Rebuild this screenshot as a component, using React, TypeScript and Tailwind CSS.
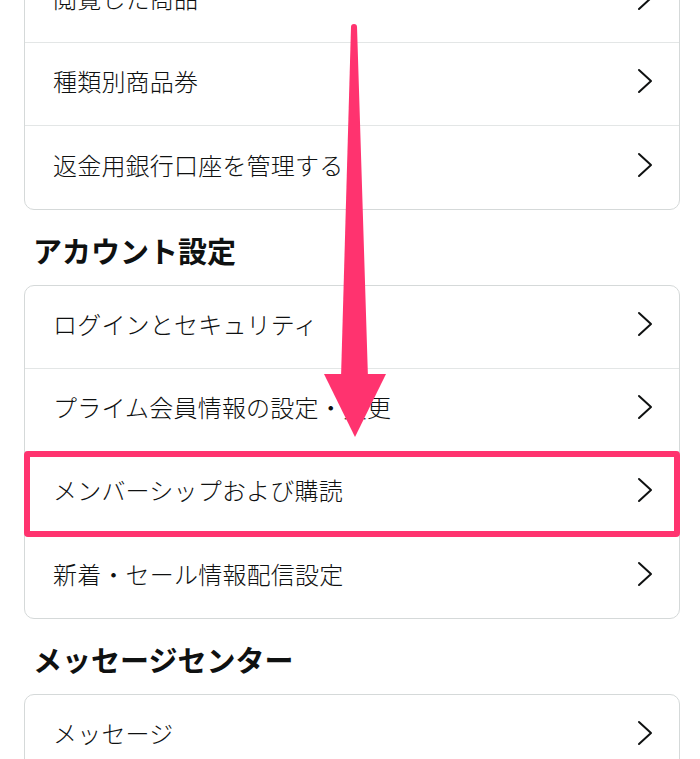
import React from "react";

const Chevron = () => (
  <svg width="16" height="26" viewBox="0 0 16 26" fill="none" className="shrink-0">
    <polyline points="2,2 14,13 2,24" stroke="#0f1111" strokeWidth="2" strokeLinecap="round" strokeLinejoin="round" />
  </svg>
);

const Row = ({ label, last }: { label: string; last?: boolean }) => (
  <div
    className={
      "flex items-center justify-between h-[83px] pb-[6px] pl-[28px] pr-[26px] " +
      (last ? "" : "border-b border-[#e3e6e6]")
    }
  >
    <span className="text-[24px] leading-none font-light text-[#0f1111] tracking-[0.2px]">{label}</span>
    <Chevron />
  </div>
);

const Card = ({ items, className }: { items: string[]; className?: string }) => (
  <div className={"border border-[#d5d9d9] rounded-[10px] bg-white " + (className ?? "")}>
    {items.map((t, i) => (
      <Row key={t} label={t} last={i === items.length - 1} />
    ))}
  </div>
);

const Heading = ({ children }: { children: React.ReactNode }) => (
  <h2 className="ml-[9px] mt-[22px] mb-[17px] text-[29px] leading-[36px] font-bold text-[#0f1111]">
    {children}
  </h2>
);

export default function App() {
  return (
    <div
      className="relative w-[700px] h-[759px] overflow-hidden bg-white"
      style={{ fontFamily: '"Noto Sans CJK JP", "Noto Sans", sans-serif' }}
    >
      <div className="pl-[24px] pr-[20px]">
        <Card
          className="-mt-[41px]"
          items={["閲覧した商品", "種類別商品券", "返金用銀行口座を管理する"]}
        />
        <Heading>アカウント設定</Heading>
        <Card
          items={[
            "ログインとセキュリティ",
            "プライム会員情報の設定・変更",
            "メンバーシップおよび購読",
            "新着・セール情報配信設定",
          ]}
        />
        <Heading>メッセージセンター</Heading>
        <Card items={["メッセージ", "その他"]} />
      </div>

      {/* highlight box */}
      <div className="absolute left-[24px] top-[451px] w-[656px] h-[86px] border-[6px] border-[#ff336f] rounded-[4px] pointer-events-none" />

      {/* arrow */}
      <svg
        className="absolute left-0 top-0 pointer-events-none"
        width="700"
        height="759"
        viewBox="0 0 700 759"
      >
        <polygon points="351,27 357,27 368,378 341,378" fill="#ff336f" />
        <circle cx="354" cy="27" r="3" fill="#ff336f" />
        <polygon points="324,374 386,374 355,437" fill="#ff336f" />
      </svg>
    </div>
  );
}
